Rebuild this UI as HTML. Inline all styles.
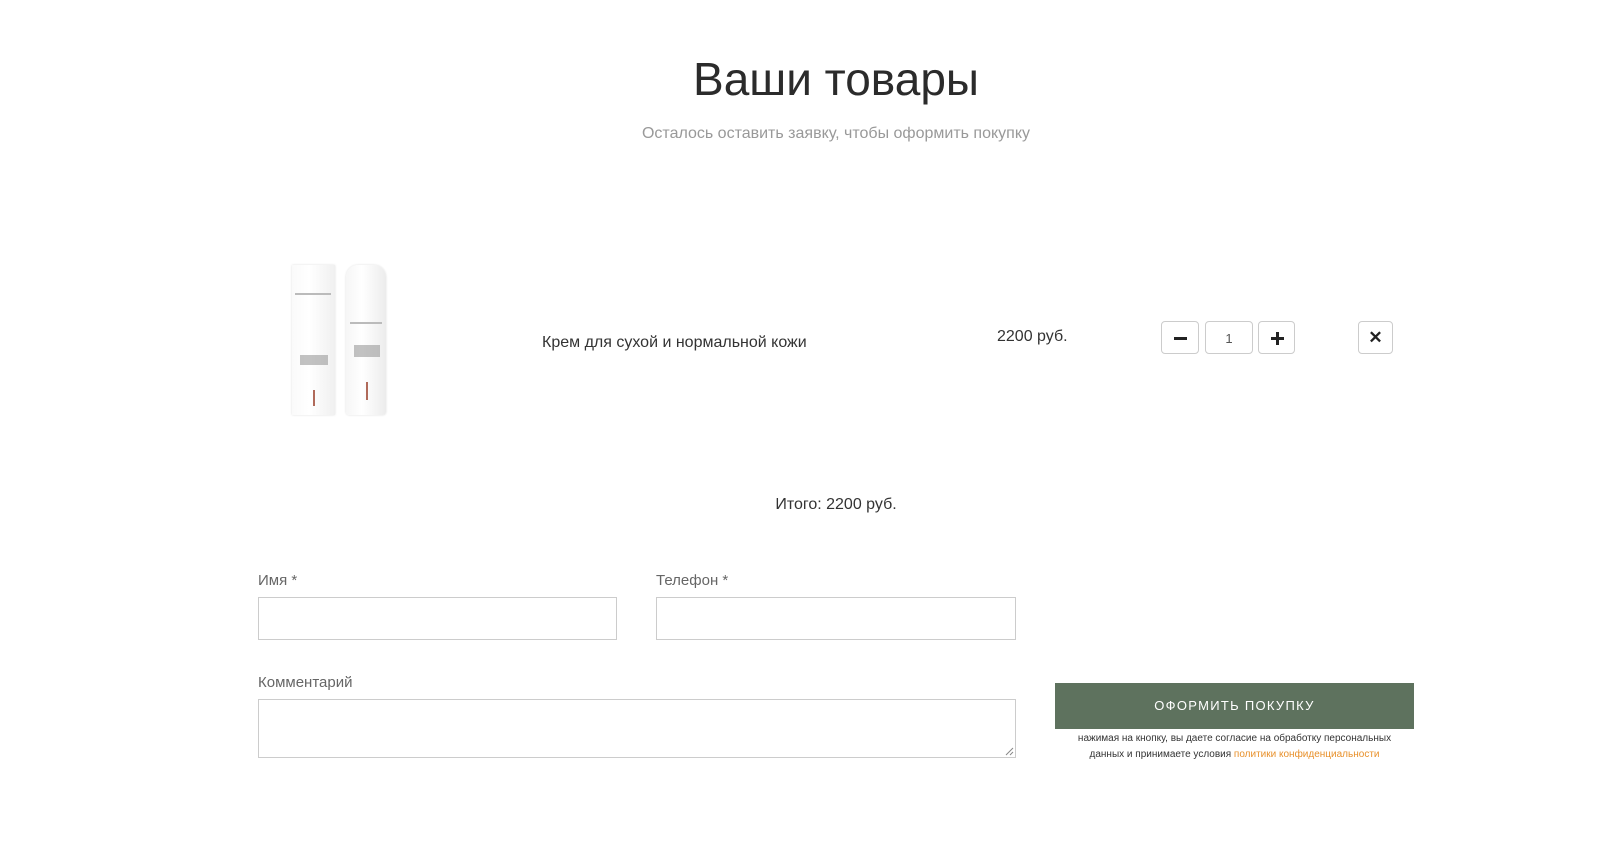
<!DOCTYPE html>
<html><head><meta charset="utf-8"><style>
body{margin:0;width:1599px;height:841px;background:#fff;font-family:"Liberation Sans",sans-serif;color:#333;position:relative;overflow:hidden}
.a{position:absolute}
h1{position:absolute;left:0;width:1672px;top:52px;margin:0;text-align:center;font-size:46px;font-weight:500;color:#2b2b2b}
.sub{left:0;width:1672px;top:125px;text-align:center;font-size:16px;color:#999}
.btn{border:1px solid #ccc;border-radius:4px;background:#fff;box-sizing:border-box}
.lbl{font-size:15px;color:#666}
.inp{border:1px solid #ccc;box-sizing:border-box;background:#fff}
</style></head><body>
<h1>Ваши товары</h1>
<div class="a sub">Осталось оставить заявку, чтобы оформить покупку</div>

<div class="a" style="left:292px;top:265px;width:43px;height:150px;background:linear-gradient(90deg,#fafafa,#fff 40%,#f0f0f0);box-shadow:0 0 2px #ddd"></div>
<div class="a" style="left:295px;top:293px;width:36px;height:2px;background:#bbb"></div>
<div class="a" style="left:300px;top:355px;width:28px;height:10px;background:#999;opacity:.6"></div>
<div class="a" style="left:313px;top:390px;width:2px;height:16px;background:#b06a5a"></div>
<div class="a" style="left:346px;top:265px;width:40px;height:150px;border-radius:12px 12px 3px 3px;background:linear-gradient(90deg,#f6f6f6,#fff 40%,#ececec);box-shadow:0 0 2px #ddd"></div>
<div class="a" style="left:350px;top:322px;width:32px;height:2px;background:#bbb"></div>
<div class="a" style="left:354px;top:345px;width:26px;height:12px;background:#999;opacity:.6"></div>
<div class="a" style="left:366px;top:382px;width:2px;height:18px;background:#b06a5a"></div>

<div class="a" style="left:542px;top:334px;font-size:16px">Крем для сухой и нормальной кожи</div>
<div class="a" style="left:997px;top:328px;font-size:16px">2200 руб.</div>

<div class="a btn" style="left:1161px;top:321px;width:38px;height:33px"><div class="a" style="left:12px;top:15px;width:13px;height:3px;background:#222"></div></div>
<div class="a btn" style="left:1205px;top:321px;width:48px;height:33px;text-align:center;line-height:33px;font-size:13px;color:#555">1</div>
<div class="a btn" style="left:1258px;top:321px;width:37px;height:33px"><div class="a" style="left:12px;top:15px;width:13px;height:3px;background:#222"></div><div class="a" style="left:17px;top:10px;width:3px;height:13px;background:#222"></div></div>
<div class="a btn" style="left:1358px;top:321px;width:35px;height:33px;text-align:center;line-height:32px;font-size:17px;font-weight:bold;color:#222">✕</div>

<div class="a" style="left:0;width:1672px;top:496px;text-align:center;font-size:16px">Итого: 2200 руб.</div>

<div class="a lbl" style="left:258px;top:572px">Имя *</div>
<div class="a inp" style="left:258px;top:597px;width:359px;height:43px"></div>
<div class="a lbl" style="left:656px;top:572px">Телефон *</div>
<div class="a inp" style="left:656px;top:597px;width:360px;height:43px"></div>
<div class="a lbl" style="left:258px;top:674px">Комментарий</div>
<div class="a inp" style="left:258px;top:699px;width:758px;height:59px"></div>
<svg class="a" style="left:1005px;top:747px" width="9" height="9"><path d="M1 8L8 1M5 8L8 5" stroke="#888" stroke-width="1"/></svg>

<div class="a" style="left:1055px;top:683px;width:359px;height:46px;background:#5e725e;color:#fff;text-align:center;line-height:46px;font-size:13px;letter-spacing:1.3px">ОФОРМИТЬ ПОКУПКУ</div>
<div class="a" style="left:1055px;top:731px;width:359px;text-align:center;font-size:10px;line-height:16px;color:#333">нажимая на кнопку, вы даете согласие на обработку персональных<br>данных и принимаете условия <span style="color:#e8902a">политики конфиденциальности</span></div>
</body></html>
